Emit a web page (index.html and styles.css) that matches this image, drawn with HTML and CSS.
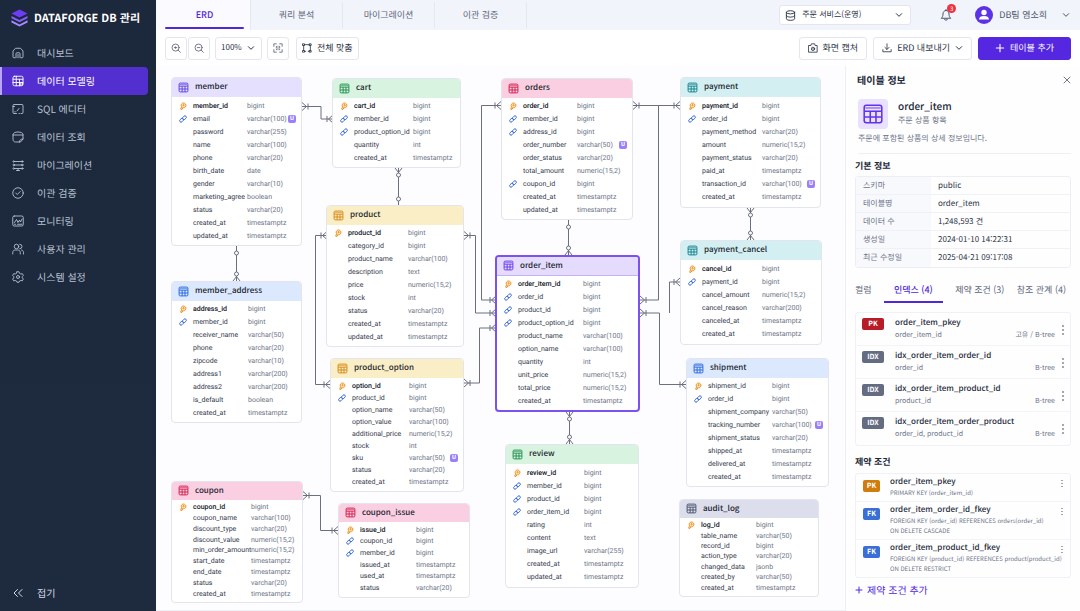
FILE: index.html
```html
<!DOCTYPE html>
<html lang="ko">
<head>
<meta charset="utf-8">
<meta name="viewport" content="width=device-width, initial-scale=1">
<title>DATAFORGE DB 관리</title>
<link rel="stylesheet" href="styles.css">
</head>
<body>
<svg class="defs" aria-hidden="true">
  <symbol id="i-table" viewBox="0 0 20 20"><rect x="2" y="2" width="16" height="16" rx="2"/><path d="M2 7.500h16M2 12.700h16M7.500 7.500v10.500M12.700 7.500v10.500"/><path d="M3 4.500h14" opacity=".6"/></symbol>
  <symbol id="i-key" viewBox="0 0 20 20"><path d="M6.500 12a6 6 0 1 1 5 2.500L9 14l-.5 3.500-3.500 1.500-1-1.500z"/><circle cx="11.500" cy="8" r="1.500"/></symbol>
  <symbol id="i-link" viewBox="0 0 20 20"><rect x="8" y="3.500" width="11" height="7" rx="3.500" transform="rotate(-45 13.500 7)"/><rect x="1" y="9.500" width="11" height="7" rx="3.500" transform="rotate(-45 6.500 13)"/></symbol>
  <symbol id="i-down" viewBox="0 0 12 12"><path d="M2 4l4 4 4-4"/></symbol>
  <symbol id="i-dots" viewBox="0 0 4 12"><circle cx="2" cy="2" r=".8"/><circle cx="2" cy="6" r=".8"/><circle cx="2" cy="10" r=".8"/></symbol>
  <symbol id="i-plus" viewBox="0 0 12 12"><path d="M6 1.500v9M1.500 6h9"/></symbol>
</svg>

<div class="app">
  <aside class="sidebar">
    <a class="brand" href="#">
      <svg class="brand-mark" viewBox="0 0 36 38" aria-hidden="true"><path fill="#6d3df5" d="M18 1l17 8.500-17 8.500L1 9.500z"/><path fill="#8460fa" d="M1 14.500l17 8.500 17-8.500v5L18 28 1 19.500z"/><path fill="#a58cff" d="M1 24l17 8.500L35 24v4.500L18 37 1 28.500z"/></svg>
      <span>DATAFORGE DB 관리</span>
    </a>
    <nav class="nav">
      <a class="nav-item" href="#"><svg class="icon" viewBox="0 0 24 24"><path d="M6 21.500H4a2 2 0 0 1-2-2V8l5-5.500h10L22 8v11.500a2 2 0 0 1-2 2h-2M8 21.500v-8a2 2 0 0 1 2-2h4a2 2 0 0 1 2 2v8M12 15v6.500"/></svg>대시보드</a>
      <a class="nav-item is-active" href="#" aria-current="page"><svg class="icon" viewBox="0 0 24 24"><rect x="2" y="2.500" width="20" height="19" rx="3"/><path d="M2 8.500h20M2 15h20M8.500 2.500v19M15 8.500v13"/><circle cx="18.500" cy="18" r="2.500"/></svg>데이터 모델링</a>
      <a class="nav-item" href="#"><svg class="icon" viewBox="0 0 24 24"><path d="M9 21H4a2 2 0 0 1-2-2V5a2 2 0 0 1 2-2h16a2 2 0 0 1 2 2v14a2 2 0 0 1-2 2h-2M2 7h3M10 16l4-5M6 17v1M14 21h1"/></svg>SQL 에디터</a>
      <a class="nav-item" href="#"><svg class="icon" viewBox="0 0 24 24"><path d="M2 7c0-3 4-5 10-5s10 2 10 5v9l-5 6H7c-3 0-5-2-5-5zM2 8h20M15 22c0-4 2-6 7-6"/></svg>데이터 조회</a>
      <a class="nav-item" href="#"><svg class="icon" viewBox="0 0 24 24"><path d="M5 5h14M5 12h14M5 19h14M12 19v4M9 23h6"/><circle cx="3.500" cy="5" r="1.500"/><circle cx="20.500" cy="5" r="1.500"/><circle cx="3.500" cy="12" r="1.500"/><circle cx="20.500" cy="12" r="1.500"/><circle cx="3.500" cy="19" r="1.500"/><circle cx="20.500" cy="19" r="1.500"/></svg>마이그레이션</a>
      <a class="nav-item" href="#"><svg class="icon" viewBox="0 0 24 24"><circle cx="12" cy="12" r="10.500"/><path d="M7.500 12l3 3 6-6"/></svg>이관 검증</a>
      <a class="nav-item" href="#"><svg class="icon" viewBox="0 0 24 24"><rect x="1.500" y="2" width="21" height="20" rx="3"/><path d="M5 15l4-6 3 6 3-5 2 4 3-6M5 18.500h2M11 18.500h9"/></svg>모니터링</a>
      <a class="nav-item" href="#"><svg class="icon" viewBox="0 0 24 24"><circle cx="9" cy="7" r="4.500"/><path d="M1.500 22v-3c0-3 2-5 5-5h5c3 0 5 2 5 5v3M15.500 2.500a4.500 4.500 0 0 1 0 9M19 14c2.500.5 4 2.500 4 5v3"/></svg>사용자 관리</a>
      <a class="nav-item" href="#"><svg class="icon" viewBox="0 0 24 24"><path d="M10 1.500h4l1 3 2.500 1.500 3.200-.6 2 3.500-2.200 2.400v2.400l2.200 2.400-2 3.500-3.200-.6L15 20l-1 2.500h-4L9 20l-2.500-1-3.200.6-2-3.500 2.200-2.400v-2.400L1.300 8.900l2-3.500 3.200.6L9 4.500z"/><circle cx="12" cy="12" r="3"/></svg>시스템 설정</a>
    </nav>
    <button class="collapse" type="button"><svg class="icon" viewBox="0 0 24 24"><path d="M11 5l-7 7 7 7M20 5l-7 7 7 7"/></svg>접기</button>
  </aside>

  <div class="main">
    <header class="topbar">
      <nav class="tabs">
        <a class="tab is-active" href="#" aria-current="page">ERD</a>
        <a class="tab" href="#">쿼리 분석</a>
        <a class="tab" href="#">마이그레이션</a>
        <a class="tab" href="#">이관 검증</a>
      </nav>
      <div class="top-right">
        <label class="picker service">
          <svg class="icon" viewBox="0 0 24 24"><ellipse cx="12" cy="5" rx="9" ry="3.500"/><path d="M3 5v14c0 2 4 3.500 9 3.500s9-1.500 9-3.500V5M3 12c0 2 4 3.500 9 3.500s9-1.500 9-3.500"/></svg>
          <select aria-label="서비스 선택"><option>주문 서비스(운영)</option></select>
          <svg class="chev"><use href="#i-down"/></svg>
        </label>
        <button class="bell" type="button" aria-label="알림 3건">
          <svg class="icon" viewBox="0 0 24 24"><path d="M3 18c2-2 3-4 3-8 0-4 2.500-7 6-7s6 3 6 7c0 4 1 6 3 8zM12 3V1M9 21c1 2 5 2 6 0"/></svg>
          <span class="count">3</span>
        </button>
        <button class="user" type="button">
          <svg class="avatar" viewBox="0 0 18 18" aria-hidden="true"><circle cx="9" cy="9" r="9" fill="#5b32e6"/><circle cx="9" cy="6.500" r="2.700" fill="#fff"/><path fill="#fff" d="M4 13.500c0-2.500 2-3.500 5-3.500s5 1 5 3.500z"/></svg>
          <span>DB팀 염소희</span>
          <svg class="chev"><use href="#i-down"/></svg>
        </button>
      </div>
    </header>

    <div class="toolbar">
      <div class="tools tools-zoom">
        <button class="btn square" type="button" aria-label="확대"><svg class="icon" viewBox="0 0 24 24"><circle cx="11" cy="11" r="8.500"/><path d="M17 17l5.500 5.500M8 11h6M11 9v4"/></svg></button>
        <button class="btn square" type="button" aria-label="축소"><svg class="icon" viewBox="0 0 24 24"><circle cx="11" cy="11" r="8.500"/><path d="M17 17l5.500 5.500M8 11h6"/></svg></button>
      </div>
      <label class="picker zoom"><select aria-label="배율"><option>100%</option></select><svg class="chev"><use href="#i-down"/></svg></label>
      <button class="btn square" type="button" aria-label="선택 맞춤"><svg class="icon" viewBox="0 0 24 24"><path d="M2 8V2h6M16 2h6v6M22 16v6h-6M8 22H2v-6M10 8H8v3M14 8h2v3M8 14v2h2M16 14v2h-2M11 12h2"/></svg></button>
      <button class="btn fit" type="button"><svg class="icon" viewBox="0 0 24 24"><rect x="2" y="2" width="4" height="4"/><rect x="18" y="2" width="4" height="4"/><rect x="2" y="18" width="4" height="4"/><rect x="18" y="18" width="4" height="4"/><path d="M4 6v12M20 6v12M6 4h12M6 20h3M15 20h3"/></svg>전체 맞춤</button>
      <div class="tools tools-right">
        <button class="btn" type="button"><svg class="icon" viewBox="0 0 24 24"><path d="M2 6h5l1-4h8l1 4h5v16H2z"/><circle cx="12" cy="14" r="4"/><path d="M12 13v2"/></svg>화면 캡처</button>
        <button class="btn" type="button"><svg class="icon" viewBox="0 0 24 24"><path d="M12 2v13M7 10.500l5 5 5-5M2 16v5h20v-5"/></svg>ERD 내보내기<svg class="chev"><use href="#i-down"/></svg></button>
        <button class="btn primary" type="button"><svg class="icon"><use href="#i-plus"/></svg>테이블 추가</button>
      </div>
    </div>

    <div class="workspace">
      <main class="canvas" id="canvas">
        <svg class="wires" aria-hidden="true">
          <defs>
            <marker id="crow" viewBox="0 0 12 10" markerWidth="12" markerHeight="10" refX="12" refY="5" markerUnits="userSpaceOnUse" orient="auto-start-reverse"><path d="M12 1L7.500 5 12 9M6 2v6"/></marker>
            <marker id="ring" viewBox="0 0 12 10" markerWidth="12" markerHeight="10" refX="12" refY="5" markerUnits="userSpaceOnUse" orient="auto-start-reverse"><circle cx="5" cy="5" r="2"/></marker>
            <marker id="ringcrow" viewBox="0 0 12 10" markerWidth="12" markerHeight="10" refX="12" refY="5" markerUnits="userSpaceOnUse" orient="auto-start-reverse"><path d="M12 1.500L7.500 5 12 8.500"/><circle cx="5" cy="5" r="2"/></marker>
          </defs>
          <path class="cc" d="M146 40.500h19v12.500h12"/>
          <path class="cr" d="M242.500 102v38"/>
          <path class="rc" d="M80.500 180v35"/>
          <path class="cc" d="M171 169.500h-11.500v149H174"/>
          <path class="cc" d="M308 169.500h11.500v77.500H340"/>
          <path class="cc" d="M345 39.500h-19.500V234H340"/>
          <path class="cc" d="M308 317h15.500v-55H340"/>
          <path class="rc" d="M412.500 154v35"/>
          <path class="cc" d="M477 39.500h47"/>
          <path class="ec" d="M502.500 39.500V234H484"/>
          <path class="cq" d="M594.500 142v32"/>
          <path class="ec" d="M513.500 247v-31H524"/>
          <path class="cc" d="M484 247h19.500v71.500H530"/>
          <path class="cq" d="M413.500 346v32"/>
          <path class="cc" d="M147 429.500h17.500v35H182"/>
        </svg>
      </main>

      <aside class="panel">
        <div class="panel-head">
          <h2>테이블 정보</h2>
          <button class="close" type="button" aria-label="닫기"><svg class="icon" viewBox="0 0 12 12"><path d="M1.500 1.500l9 9M10.500 1.500l-9 9"/></svg></button>
        </div>
        <div class="entity">
          <span class="entity-icon"><svg class="glyph"><use href="#i-table"/></svg></span>
          <div><h3>order_item</h3><p>주문 상품 항목</p></div>
        </div>
        <p class="entity-desc">주문에 포함된 상품의 상세 정보입니다.</p>

        <h2 class="section-title">기본 정보</h2>
        <table class="facts">
          <tr><th scope="row">스키마</th><td>public</td></tr>
          <tr><th scope="row">테이블명</th><td>order_item</td></tr>
          <tr><th scope="row">데이터 수</th><td>1,248,593 건</td></tr>
          <tr><th scope="row">생성일</th><td>2024-01-10 14:22:31</td></tr>
          <tr><th scope="row">최근 수정일</th><td>2025-04-21 09:17:08</td></tr>
        </table>

        <nav class="subtabs">
          <a href="#">컬럼</a>
          <a class="is-active" href="#" aria-current="page">인덱스 (4)</a>
          <a href="#">제약 조건 (3)</a>
          <a href="#">참조 관계 (4)</a>
        </nav>

        <ul class="list indexes">
          <li><span class="badge pk">PK</span><div class="item"><strong>order_item_pkey</strong><p><span>order_item_id</span><span>고유 / B-tree</span></p></div><button class="more" type="button" aria-label="더보기"><svg><use href="#i-dots"/></svg></button></li>
          <li><span class="badge idx">IDX</span><div class="item"><strong>idx_order_item_order_id</strong><p><span>order_id</span><span>B-tree</span></p></div><button class="more" type="button" aria-label="더보기"><svg><use href="#i-dots"/></svg></button></li>
          <li><span class="badge idx">IDX</span><div class="item"><strong>idx_order_item_product_id</strong><p><span>product_id</span><span>B-tree</span></p></div><button class="more" type="button" aria-label="더보기"><svg><use href="#i-dots"/></svg></button></li>
          <li><span class="badge idx">IDX</span><div class="item"><strong>idx_order_item_order_product</strong><p><span>order_id, product_id</span><span>B-tree</span></p></div><button class="more" type="button" aria-label="더보기"><svg><use href="#i-dots"/></svg></button></li>
        </ul>

        <h2 class="section-title">제약 조건</h2>
        <ul class="list constraints">
          <li><span class="badge cpk">PK</span><div class="item"><strong>order_item_pkey</strong><p>PRIMARY KEY (order_item_id)</p></div><button class="more" type="button" aria-label="더보기"><svg><use href="#i-dots"/></svg></button></li>
          <li><span class="badge fk">FK</span><div class="item"><strong>order_item_order_id_fkey</strong><p>FOREIGN KEY (order_id) REFERENCES orders(order_id)<br>ON DELETE CASCADE</p></div><button class="more" type="button" aria-label="더보기"><svg><use href="#i-dots"/></svg></button></li>
          <li><span class="badge fk">FK</span><div class="item"><strong>order_item_product_id_fkey</strong><p>FOREIGN KEY (product_id) REFERENCES product(product_id)<br>ON DELETE RESTRICT</p></div><button class="more" type="button" aria-label="더보기"><svg><use href="#i-dots"/></svg></button></li>
        </ul>
        <button class="add" type="button"><svg class="icon"><use href="#i-plus"/></svg>제약 조건 추가</button>
      </aside>
    </div>
  </div>
</div>
<script src="erd.js"></script>
</body>
</html>
```

FILE: styles.css
```css
* { box-sizing: border-box; }
body, h2, h3, p, ul { margin: 0; padding: 0; }
body, button, select {
  font-family: "Noto Sans CJK KR", "Noto Sans", sans-serif;
  color: #2b3344;
  text-rendering: geometricPrecision;
}
body { font-size: 8px; line-height: 12px; background: #fff; }
button, select { background: none; border: 0; padding: 0; font-size: 9px; line-height: 12px; }
a { color: inherit; text-decoration: none; }
ul { list-style: none; }
svg { flex: none; display: block; }
.defs { position: absolute; width: 0; height: 0; }
.icon, .chev { fill: none; stroke: currentColor; stroke-width: 2; stroke-linecap: round; stroke-linejoin: round; }
.icon { width: 12px; height: 12px; }
.chev { width: 8px; height: 8px; stroke-width: 1.5; }

.app { display: flex; min-height: 100vh; }

/* Sidebar */
.sidebar {
  width: 156px; flex: none; display: flex; flex-direction: column;
  background: linear-gradient(#1c283b, #1e2b3e); color: #b9c2d2; padding-bottom: 10px;
}
.brand { display: flex; align-items: center; gap: 6px; height: 39px; padding: 0 0 3px 11px; color: #fff; font-size: 11px; font-weight: 700; white-space: nowrap; }
.brand-mark { width: 17px; height: 18px; }
.nav-item { display: flex; align-items: center; gap: 13px; height: 28px; margin-right: 8px; padding-left: 12px; font-size: 10px; white-space: nowrap; }
.nav-item .icon { stroke-width: 1.8; }
.nav-item.is-active { background: #542fd0; color: #fff; border-left: 2px solid #b9a5fa; padding-left: 10px; border-radius: 0 4px 4px 0; }
.collapse { display: flex; align-items: center; gap: 13px; margin-top: auto; padding-left: 12px; height: 16px; font-size: 10px; color: #d5dbe6; }

/* Top bar */
.main { flex: 1; min-width: 0; display: flex; flex-direction: column; }
.topbar { display: flex; justify-content: space-between; height: 30px; background: #f2f4fb; }
.tabs { display: flex; }
.tab { width: 92px; display: flex; align-items: center; justify-content: center; font-size: 9px; color: #5d6678; border-right: 1px solid #e5e8f1; margin: 2px 0; }
.tab.is-active { width: 95px; margin: 0; padding-left: 3px; background: #fafaff; color: #5028dc; font-weight: 500; position: relative; }
.tab.is-active::after { content: ""; position: absolute; left: 9px; right: 6px; bottom: 1px; height: 2px; border-radius: 1px; background: #5028dc; }
.top-right { display: flex; align-items: center; padding-right: 10px; }
.picker { display: flex; align-items: center; background: #fff; border: 1px solid #e3e6ee; border-radius: 3px; }
.picker select { appearance: none; flex: 1; min-width: 0; outline: 0; font-size: 8px; }
.service { width: 132px; height: 20px; padding: 0 7px 0 5px; gap: 6px; }
.service .icon { width: 11px; height: 11px; }
.bell { position: relative; margin-left: 29px; color: #4b5467; }
.count { position: absolute; right: -4px; top: -5px; width: 9px; height: 9px; border-radius: 50%; background: #ee3340; color: #fff; font-size: 6px; line-height: 9px; text-align: center; }
.user { display: flex; align-items: center; gap: 6px; margin-left: 23px; color: #4b5467; white-space: nowrap; }
.user .chev { margin-left: 9px; }
.avatar { width: 18px; height: 18px; }

/* Toolbar */
.toolbar { display: flex; align-items: center; gap: 5px; height: 36px; padding: 0 9px; }
.tools { display: flex; }
.tools-zoom { gap: 1px; }
.tools-right { margin-left: auto; gap: 6px; }
.btn { display: flex; align-items: center; justify-content: center; gap: 5px; height: 23px; padding: 0 8px; border: 1px solid #e3e6ee; border-radius: 3px; background: #fff; white-space: nowrap; }
.btn .icon { width: 10px; height: 10px; }
.square { width: 22px; padding: 0; color: #5a6376; }
.zoom { width: 47px; height: 23px; padding: 0 6px 0 5px; }
.fit { margin-left: 2px; padding: 0 5px; }
.primary { width: 93px; border-color: #5527e0; background: #5527e0; color: #fff; }
.primary .icon { stroke-width: 1.3; }

/* Diagram */
.workspace { flex: 1; display: flex; }
.canvas { flex: 1; min-width: 0; position: relative; overflow: hidden; background: #fdfdff; border-bottom: 1px solid #eff0f5; }
.wires { position: absolute; inset: 0; width: 100%; height: 100%; fill: none; stroke: #6b7080; stroke-width: 1; }
.wires circle { fill: #fff; }
.cc { marker-start: url(#crow); marker-end: url(#crow); }
.ec { marker-end: url(#crow); }
.cr { marker-start: url(#ringcrow); marker-end: url(#ring); }
.rc { marker-start: url(#ring); marker-end: url(#ringcrow); }
.cq { marker-start: url(#ringcrow); marker-end: url(#ringcrow); }

.node { position: absolute; display: flex; flex-direction: column; background: #fff; border: 1px solid #e2e5ee; border-radius: 4px; }
.node-head { display: flex; align-items: center; gap: 6px; height: 19px; padding: 0 0 1px 6px; border-radius: 3px 3px 0 0; }
.node h3 { font-size: 8px; line-height: 12px; font-weight: 500; color: #171c2b; }
.glyph { width: 11px; height: 11px; fill: none; stroke: currentColor; stroke-width: 1.8; }
.columns { flex: 1; width: 100%; margin: 2px 0 3px; border-collapse: collapse; table-layout: fixed; font-family: Roboto, "Noto Sans CJK KR", sans-serif; font-size: 7px; line-height: 10px; white-space: nowrap; }
.columns td, .columns th { padding: 0; text-align: left; vertical-align: middle; font-weight: 400; }
.columns th { color: #343b4e; }
.columns td { color: #6d7487; }
.columns .strong { font-weight: 500; color: #10141f; }
.columns .mark { padding-left: 7px; }
.mark svg { width: 8px; height: 8px; fill: none; stroke-width: 2.2; }
.mark .key { stroke: #e88a17; fill: #fde3b8; }
.mark .link { stroke: #2f62d8; }
.unique { float: right; width: 8px; height: 8px; margin: 1px 5px 0 0; border-radius: 2px; background: #9a80f8; color: #fff; font-size: 6px; line-height: 8px; font-weight: 700; text-align: center; }
.compact .node-head { height: 18px; }

.violet .node-head { background: #e4e0fd; color: #6247dc; }
.green .node-head { background: #d8f3df; color: #259152; }
.yellow .node-head { background: #faeec6; color: #d98a18; }
.blue .node-head { background: #dbe8fd; color: #2d6adf; }
.pink .node-head { background: #fbcfe2; color: #d0234f; }
.teal .node-head { background: #d3eff1; color: #168391; }
.slate .node-head { background: #dcdeec; color: #4c566f; }
.selected { border: 2px solid #7a52f0; }
.selected .node-head { background: #e5dcfd; color: #6a3fe8; border-bottom: 1px solid #c5b2f8; }

/* Detail panel */
.panel { width: 235px; flex: none; border-left: 1px solid #eceef4; padding: 7px 9px 8px; background: #fefeff; }
.panel h2 { font-size: 9px; line-height: 14px; font-weight: 700; color: #222838; }
.panel-head { display: flex; align-items: center; justify-content: space-between; padding-left: 2px; }
.panel .panel-head h2 { font-size: 10px; }
.close .icon { width: 8px; height: 8px; stroke-width: 1.2; color: #4b5467; }
.entity { display: flex; gap: 10px; padding: 12px 3px 0; }
.entity-icon { width: 30px; height: 30px; border-radius: 4px; background: #e9e1fd; color: #6133ea; display: grid; place-items: center; }
.entity-icon .glyph { width: 22px; height: 22px; stroke-width: 1.4; }
.entity h3 { font-size: 10px; line-height: 14px; font-weight: 500; color: #222838; }
.entity p { margin-top: 2px; color: #6d7487; }
.entity-desc { margin: 0 0 5px 3px; padding: 4px 0 8px; border-bottom: 1px solid #eef0f5; color: #6d7487; }
.facts { width: 100%; margin-top: 3px; border-spacing: 0; border: 1px solid #eceef4; border-radius: 3px; }
.facts th, .facts td { height: 18px; padding: 0 0 0 7px; text-align: left; border-bottom: 1px solid #eff1f6; font-weight: 400; line-height: 12px; }
.facts tr:last-child > * { border-bottom: 0; }
.facts th { width: 75px; background: #f8f9fc; color: #6d7487; }
.facts td { color: #2b3344; }
.subtabs { display: flex; justify-content: space-between; margin-top: 9px; padding-right: 5px; color: #5d6678; font-size: 9px; }
.subtabs a { height: 26px; padding-top: 7px; white-space: nowrap; }
.subtabs .is-active { color: #5028dc; font-weight: 500; border-bottom: 2px solid #5028dc; padding: 7px 10px 0; }
.list { border: 1px solid #f0f1f6; border-radius: 3px; }
.list li { display: flex; align-items: flex-start; border-bottom: 1px solid #f3f4f8; }
.list li:last-child { border-bottom: 0; }
.item { flex: 1; min-width: 0; }
.item strong { display: block; font-weight: 500; color: #222838; }
.item p { color: #6d7487; }
.badge { border-radius: 2px; color: #fff; font-weight: 700; text-align: center; flex: none; }
.more { align-self: center; color: #333b4d; }
.more svg { width: 4px; height: 12px; fill: currentColor; }
.indexes { margin: 9px 0; }
.indexes li { height: 33px; padding: 4px 5px 0 6px; }
.indexes .badge { width: 22px; height: 12px; margin-top: 1px; font-size: 7px; line-height: 12px; margin-right: 11px; }
.indexes p { display: flex; justify-content: space-between; padding-right: 6px; font-size: 7px; }
.indexes .more { margin-bottom: 3px; }
.pk { background: #b81c27; }
.idx { background: #646c82; }
.cpk { background: #d07c0c; }
.fk { background: #3a6fd6; }
.constraints { margin-top: 4px; }
.constraints li { padding: 2px 6px 3px 7px; }
.constraints .badge { width: 17px; height: 12px; margin: 4px 10px 0 0; font-size: 7px; line-height: 12px; }
.constraints p { font-size: 6px; line-height: 10px; white-space: nowrap; }
.constraints .more { align-self: flex-start; margin-top: 3px; }
.constraints .more svg { height: 9px; }
.add { display: flex; align-items: center; gap: 4px; margin-top: 6px; color: #5028dc; font-size: 10px; }
.add .icon { width: 8px; height: 8px; stroke-width: 1.5; }
```

FILE: erd.js
```js
// x, y, width, height of the card and the offset of its type column, then the columns
// as "name type [pk|fk] [strong] [unique]".
const nodes = [
  { name: 'member', tone: 'violet', box: [15, 11, 131, 169], type: 75, cols: ['member_id bigint pk strong', 'email varchar(100) fk unique', 'password varchar(255)', 'name varchar(100)', 'phone varchar(20)', 'birth_date date', 'gender varchar(10)', 'marketing_agree boolean', 'status varchar(20)', 'created_at timestamptz', 'updated_at timestamptz'] },
  { name: 'cart', tone: 'green', box: [176, 12, 129, 90], type: 80, cols: ['cart_id bigint pk strong', 'member_id bigint fk', 'product_option_id bigint fk', 'quantity int', 'created_at timestamptz'] },
  { name: 'product', tone: 'yellow', box: [170, 139, 138, 142], type: 81, cols: ['product_id bigint pk strong', 'category_id bigint', 'product_name varchar(100)', 'description text', 'price numeric(15,2)', 'stock int', 'status varchar(20)', 'created_at timestamptz', 'updated_at timestamptz'] },
  { name: 'product_option', tone: 'yellow', box: [174, 292, 134, 134], type: 78, cols: ['option_id bigint pk strong', 'product_id bigint fk', 'option_name varchar(50)', 'option_value varchar(100)', 'additional_price numeric(15,2)', 'stock int', 'sku varchar(50) unique', 'status varchar(20)', 'created_at timestamptz'] },
  { name: 'member_address', tone: 'blue', box: [15, 215, 131, 142], type: 76, cols: ['address_id bigint pk strong', 'member_id bigint fk', 'receiver_name varchar(50)', 'phone varchar(20)', 'zipcode varchar(10)', 'address1 varchar(200)', 'address2 varchar(200)', 'is_default boolean', 'created_at timestamptz'] },
  { name: 'coupon', tone: 'pink compact', box: [15, 415, 132, 122], type: 79, cols: ['coupon_id bigint pk strong', 'coupon_name varchar(100)', 'discount_type varchar(20)', 'discount_value numeric(15,2)', 'min_order_amount numeric(15,2)', 'start_date timestamptz', 'end_date timestamptz', 'status varchar(20)', 'created_at timestamptz'] },
  { name: 'coupon_issue', tone: 'pink compact', box: [182, 437, 132, 95], type: 77, cols: ['issue_id bigint pk strong', 'coupon_id bigint fk', 'member_id bigint fk', 'issued_at timestamptz', 'used_at timestamptz', 'status varchar(20)'] },
  { name: 'orders', tone: 'pink', box: [345, 12, 132, 142], type: 75, cols: ['order_id bigint pk strong', 'member_id bigint fk', 'address_id bigint fk', 'order_number varchar(50) unique', 'order_status varchar(20)', 'total_amount numeric(15,2)', 'coupon_id bigint fk', 'created_at timestamptz', 'updated_at timestamptz'] },
  { name: 'payment', tone: 'teal', box: [524, 11, 141, 131], type: 81, cols: ['payment_id bigint pk strong', 'order_id bigint fk', 'payment_method varchar(20)', 'amount numeric(15,2)', 'payment_status varchar(20)', 'paid_at timestamptz', 'transaction_id varchar(100) unique', 'created_at timestamptz'] },
  { name: 'payment_cancel', tone: 'teal', box: [524, 174, 142, 105], type: 81, cols: ['cancel_id bigint pk strong', 'payment_id bigint fk', 'cancel_amount numeric(15,2)', 'cancel_reason varchar(200)', 'canceled_at timestamptz', 'created_at timestamptz'] },
  { name: 'order_item', tone: 'selected', box: [339, 189, 145, 157], type: 86, cols: ['order_item_id bigint pk strong', 'order_id bigint fk', 'product_id bigint fk', 'product_option_id bigint fk', 'product_name varchar(100)', 'option_name varchar(100)', 'quantity int', 'unit_price numeric(15,2)', 'total_price numeric(15,2)', 'created_at timestamptz'] },
  { name: 'shipment', tone: 'blue', box: [530, 292, 143, 129], type: 85, cols: ['shipment_id bigint pk', 'order_id bigint fk', 'shipment_company varchar(50)', 'tracking_number varchar(100) unique', 'shipment_status varchar(20)', 'shipped_at timestamptz', 'delivered_at timestamptz', 'created_at timestamptz'] },
  { name: 'review', tone: 'green', box: [349, 378, 134, 144], type: 78, cols: ['review_id bigint pk strong', 'member_id bigint fk', 'product_id bigint fk', 'order_item_id bigint fk', 'rating int', 'content text', 'image_url varchar(255)', 'created_at timestamptz', 'updated_at timestamptz'] },
  { name: 'audit_log', tone: 'slate compact', box: [523, 433, 140, 98], type: 76, cols: ['log_id bigint pk strong', 'table_name varchar(50)', 'record_id bigint', 'action_type varchar(20)', 'changed_data jsonb', 'created_by varchar(50)', 'created_at timestamptz'] },
];

const iconFor = (flags) => {
  if (flags.includes('pk')) return '<svg class="key"><use href="#i-key"/></svg>';
  if (flags.includes('fk')) return '<svg class="link"><use href="#i-link"/></svg>';
  return '';
};

const rowFor = (column) => {
  const [name, type, ...flags] = column.split(' ');
  const strong = flags.includes('strong') ? ' class="strong"' : '';
  const unique = flags.includes('unique') ? '<span class="unique">U</span>' : '';
  return `<tr><td class="mark">${iconFor(flags)}</td><th scope="row"${strong}>${name}</th><td>${unique}${type}</td></tr>`;
};

const canvas = document.getElementById('canvas');
for (const { name, tone, box: [x, y, w, h], type, cols } of nodes) {
  canvas.insertAdjacentHTML('beforeend', `
    <section class="node ${tone}" style="left:${x}px;top:${y}px;width:${w}px;height:${h}px">
      <div class="node-head"><svg class="glyph"><use href="#i-table"/></svg><h3>${name}</h3></div>
      <table class="columns">
        <colgroup><col style="width:21px"><col style="width:${type - 21}px"><col></colgroup>
        ${cols.map(rowFor).join('')}
      </table>
    </section>`);
}
```
